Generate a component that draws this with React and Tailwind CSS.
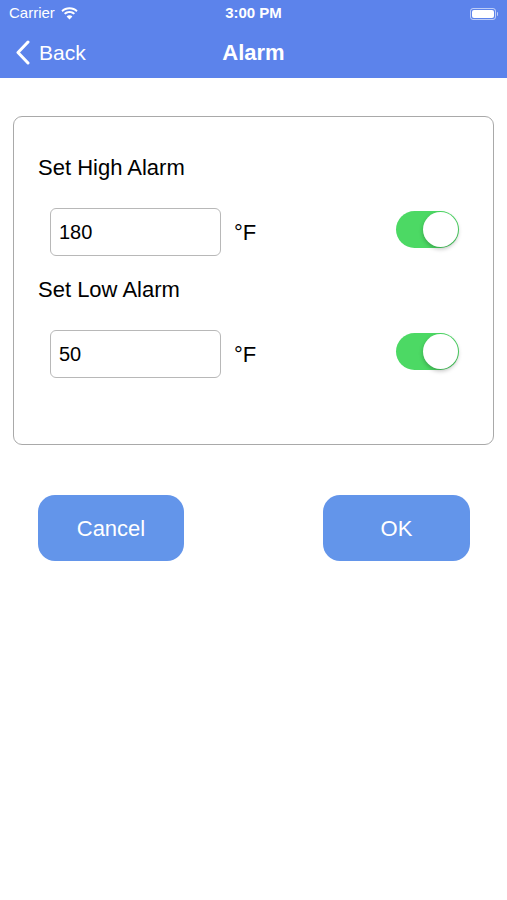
import { useState } from "react"

function Toggle({ on, onChange }) {
  return (
    <button
      onClick={() => onChange(!on)}
      className={`relative block w-[63px] h-[37px] rounded-full transition-colors ${on ? "bg-[#4cd964]" : "bg-[#e5e5ea]"}`}
    >
      <span
        className={`absolute top-[1px] w-[35px] h-[35px] rounded-full bg-white shadow-[0_2px_4px_rgba(0,0,0,0.25)] transition-all ${on ? "left-[27px]" : "left-[1px]"}`}
      />
    </button>
  )
}

function AlarmRow({ label, value, setValue, on, setOn, top }) {
  return (
    <div className={top}>
      <p className="text-[22px] leading-[28px] text-black">{label}</p>
      <div className="flex items-center mt-[26px] ml-[12px]">
        <input
          type="text"
          value={value}
          onChange={(e) => setValue(e.target.value)}
          className="w-[171px] h-[48px] px-[8px] text-[20px] text-black border border-[#b8b8b8] rounded-[6px] focus:outline-none"
        />
        <span className="ml-[13px] text-[22px] text-black">°F</span>
        <div className="ml-auto flex mt-[-5px]">
          <Toggle on={on} onChange={setOn} />
        </div>
      </div>
    </div>
  )
}

export default function App() {
  const [high, setHigh] = useState("180")
  const [low, setLow] = useState("50")
  const [highOn, setHighOn] = useState(true)
  const [lowOn, setLowOn] = useState(true)

  return (
    <div className="w-[507px] h-[900px] bg-white font-['Liberation_Sans',Arial,sans-serif]">
      {/* Header */}
      <div className="bg-[#5c83eb] text-white">
        <div className="h-[27px] flex items-center px-[9px] relative">
          <span className="text-[15px]">Carrier</span>
          <svg width="17" height="13" viewBox="0 0 17 13" className="ml-[6px]" fill="white">
            <path d="M8.5 2.2c2.6 0 5 1 6.8 2.7l1.3-1.4C14.5 1.5 11.6.3 8.5.3S2.5 1.5.4 3.5l1.3 1.4C3.5 3.2 5.9 2.2 8.5 2.2z" />
            <path d="M8.5 5.9c1.6 0 3.1.6 4.2 1.7l1.3-1.4C12.6 4.8 10.6 4 8.5 4S4.4 4.8 3 6.2l1.3 1.4c1.1-1.1 2.6-1.7 4.2-1.7z" />
            <path d="M8.5 12.5l2.9-3.1c-.8-.7-1.8-1.2-2.9-1.2s-2.1.5-2.9 1.2z" />
          </svg>
          <span className="absolute left-1/2 -translate-x-1/2 text-[15px] font-bold">3:00 PM</span>
          <div className="ml-auto flex items-center">
            <div className="w-[26px] h-[12px] rounded-[3px] border border-white/60 p-[1px]">
              <div className="w-full h-full rounded-[2px] bg-white" />
            </div>
            <div className="w-[1.5px] h-[4px] bg-white/60 rounded-r-sm ml-[1px]" />
          </div>
        </div>
        <div className="h-[51px] flex items-center relative px-[15px]">
          <svg width="16" height="25" viewBox="0 0 16 25" fill="none" stroke="white" strokeWidth="3" strokeLinecap="round" strokeLinejoin="round">
            <path d="M13 2L3 12.5 13 23" />
          </svg>
          <span className="ml-[8px] text-[21px]">Back</span>
          <span className="absolute left-1/2 -translate-x-1/2 text-[22px] font-bold">Alarm</span>
        </div>
      </div>

      {/* Alarm settings card */}
      <div className="mx-[13px] mt-[38px] border border-[#a9a9a9] rounded-[9px] pl-[24px] pr-[34px] pt-[37px] pb-[66px]">
        <AlarmRow label="Set High Alarm" value={high} setValue={setHigh} on={highOn} setOn={setHighOn} />
        <AlarmRow label="Set Low Alarm" value={low} setValue={setLow} on={lowOn} setOn={setLowOn} top="mt-[20px]" />
      </div>

      {/* Buttons */}
      <div className="flex justify-between mt-[50px] pl-[38px] pr-[37px]">
        <button className="w-[146px] h-[66px] rounded-[17px] bg-[#6395ea] text-white text-[22px]">Cancel</button>
        <button className="w-[147px] h-[66px] rounded-[17px] bg-[#6395ea] text-white text-[22px]">OK</button>
      </div>
    </div>
  )
}
